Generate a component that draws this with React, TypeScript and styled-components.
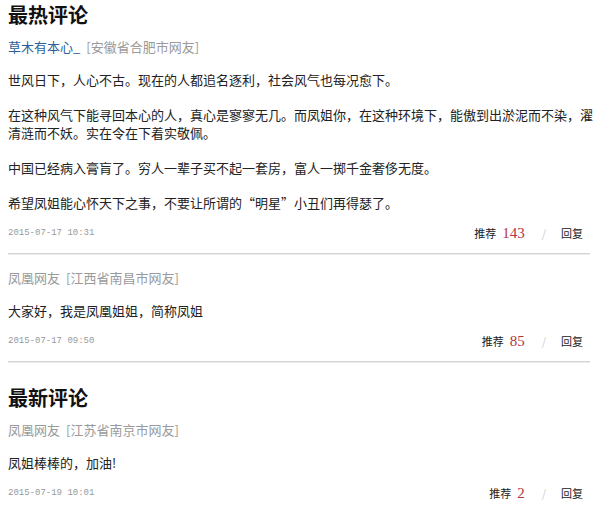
import React from "react"
import styled, { createGlobalStyle } from "styled-components"

const hotComments = [
  {
    id: 1,
    name: "草木有本心_",
    highlight: true,
    location: "[安徽省合肥市网友]",
    paragraphs: [
      "世风日下，人心不古。现在的人都追名逐利，社会风气也每况愈下。",
      "在这种风气下能寻回本心的人，真心是寥寥无几。而凤姐你，在这种环境下，能傲到出淤泥而不染，濯清涟而不妖。实在令在下着实敬佩。",
      "中国已经病入膏肓了。穷人一辈子买不起一套房，富人一掷千金奢侈无度。",
      "希望凤姐能心怀天下之事，不要让所谓的“明星”小丑们再得瑟了。",
    ],
    time: "2015-07-17 10:31",
    likes: 143,
  },
  {
    id: 2,
    name: "凤凰网友",
    highlight: false,
    location: "[江西省南昌市网友]",
    paragraphs: ["大家好，我是凤凰姐姐，简称凤姐"],
    time: "2015-07-17 09:50",
    likes: 85,
  },
]

const newComments = [
  {
    id: 3,
    name: "凤凰网友",
    highlight: false,
    location: "[江苏省南京市网友]",
    paragraphs: ["凤姐棒棒的，加油!"],
    time: "2015-07-19 10:01",
    likes: 2,
  },
]

type CommentData = (typeof hotComments)[number]

const GlobalStyle = createGlobalStyle`
  body {
    margin: 0;
    background: #fff;
    font-family: "Noto Sans CJK SC", "Noto Sans", sans-serif;
  }
`

const Page = styled.div`
  width: 600px;
  height: 512px;
  box-sizing: border-box;
  padding: 0 2px 0 8px;
  overflow: hidden;
  background: #fff;
`

const Section = styled.section<{ $gap?: number }>`
  margin-top: ${(props) => props.$gap ?? 0}px;
`

const SectionTitle = styled.h2`
  margin: 0;
  font-size: 20px;
  line-height: 30px;
  font-weight: 700;
  color: #111;
`

const CommentBox = styled.div`
  padding-top: 8px;
`

const Author = styled.div`
  font-size: 13px;
  line-height: 18px;
  color: #9a9a9a;
  white-space: nowrap;
`

const Name = styled.span<{ $highlight?: boolean }>`
  color: ${(props) => (props.$highlight ? "#2b5f9a" : "#9a9a9a")};
`

const Location = styled.span`
  margin-left: 6px;
`

const Body = styled.div`
  margin-top: 15px;
`

const Paragraph = styled.p`
  margin: 0;
  font-size: 13px;
  line-height: 18px;
  color: #222;

  & + & {
    margin-top: 17px;
  }
`

const Meta = styled.div`
  display: flex;
  align-items: center;
  justify-content: space-between;
  height: 18px;
  margin-top: 12px;
  padding-right: 15px;
`

const Time = styled.span`
  font-family: "Liberation Mono", monospace;
  font-size: 9px;
  color: #999;
`

const Actions = styled.div`
  display: flex;
  align-items: center;
  font-size: 11px;
  color: #222;
`

const Count = styled.span`
  margin-left: 6px;
  font-family: "Liberation Serif", serif;
  font-size: 15px;
  color: #b3343e;
`

const Slash = styled.span`
  margin: 0 15px 0 17px;
  color: #ccc;
`

const Divider = styled.hr`
  margin: 11px 8px 7px 0;
  border: 0;
  height: 1px;
  background: #d4d4d4;
  box-shadow: 0 1px 0 #ededed;
`

const Comment = ({ data }: { data: CommentData }) => (
  <CommentBox>
    <Author>
      <Name $highlight={data.highlight}>{data.name}</Name>
      <Location>{data.location}</Location>
    </Author>
    <Body>
      {data.paragraphs.map((p, i) => (
        <Paragraph key={i}>{p}</Paragraph>
      ))}
    </Body>
    <Meta>
      <Time>{data.time}</Time>
      <Actions>
        推荐<Count>{data.likes}</Count>
        <Slash>/</Slash>
        回复
      </Actions>
    </Meta>
  </CommentBox>
)

export default function App() {
  return (
    <Page>
      <GlobalStyle />
      <Section>
        <SectionTitle>最热评论</SectionTitle>
        {hotComments.map((c) => (
          <React.Fragment key={c.id}>
            <Comment data={c} />
            <Divider />
          </React.Fragment>
        ))}
      </Section>
      <Section $gap={21}>
        <SectionTitle>最新评论</SectionTitle>
        {newComments.map((c) => (
          <Comment key={c.id} data={c} />
        ))}
      </Section>
    </Page>
  )
}
